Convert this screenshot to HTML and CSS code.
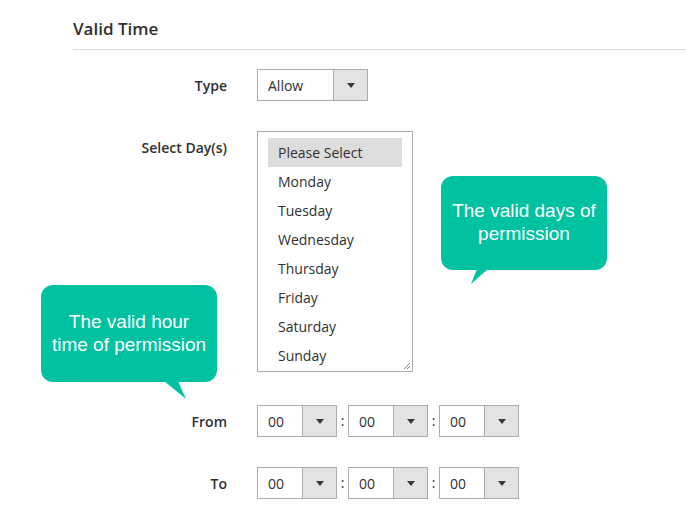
FILE: index.html
```html
<!DOCTYPE html>
<html>
<head>
<meta charset="utf-8">
<link rel="stylesheet" href="styles.css">
</head>
<body>
<div class="section">
  <h2 class="title">Valid Time</h2>
  <div class="form">
    <div class="row row-type">
      <div class="label">Type</div>
      <div class="select select-type"><span class="val">Allow</span><span class="arrow"></span></div>
    </div>
    <div class="row row-days">
      <div class="label">Select Day(s)</div>
      <div class="multi">
        <div class="opt sel">Please Select</div>
        <div class="opt">Monday</div>
        <div class="opt">Tuesday</div>
        <div class="opt">Wednesday</div>
        <div class="opt">Thursday</div>
        <div class="opt">Friday</div>
        <div class="opt">Saturday</div>
        <div class="opt">Sunday</div>
        <svg class="grip" width="8" height="8" viewBox="0 0 8 8"><path d="M7 1 L1 7 M7 4 L4 7" stroke="#8a8a8a" stroke-width="1"/></svg>
      </div>
    </div>
    <div class="row row-from">
      <div class="label">From</div>
      <div class="time">
        <div class="select select-time"><span class="val">00</span><span class="arrow"></span></div>
        <span class="colon">:</span>
        <div class="select select-time"><span class="val">00</span><span class="arrow"></span></div>
        <span class="colon">:</span>
        <div class="select select-time"><span class="val">00</span><span class="arrow"></span></div>
      </div>
    </div>
    <div class="row row-to">
      <div class="label">To</div>
      <div class="time">
        <div class="select select-time"><span class="val">00</span><span class="arrow"></span></div>
        <span class="colon">:</span>
        <div class="select select-time"><span class="val">00</span><span class="arrow"></span></div>
        <span class="colon">:</span>
        <div class="select select-time"><span class="val">00</span><span class="arrow"></span></div>
      </div>
    </div>
  </div>
</div>

<div class="bubble bubble-days">
  The valid days of<br>permission
  <svg class="tail tail-days" width="20" height="16" viewBox="0 0 20 16"><path d="M7 0 L18 0 L1 15 Z" fill="#00c2a1"/></svg>
</div>
<div class="bubble bubble-hours">
  The valid hour<br>time of permission
  <svg class="tail tail-hours" width="24" height="20" viewBox="0 0 24 20"><path d="M2 0 L16 0 L24 18 Z" fill="#00c2a1"/></svg>
</div>
</body>
</html>
```
FILE: styles.css
```css
html, body {
  margin: 0;
  padding: 0;
  background: #ffffff;
}
body {
  font-family: "Open Sans", "Liberation Sans", sans-serif;
  color: #303030;
  width: 686px;
  height: 514px;
  overflow: hidden;
  position: relative;
}
.section {
  padding-left: 73px;
}
.title {
  margin: 0;
  padding-top: 17px;
  height: 32px;
  box-sizing: content-box;
  font-size: 17px;
  font-weight: 600;
  line-height: 24px;
  color: #303030;
  border-bottom: 1px solid #e3ddd2;
}
.form {
  padding-top: 19px;
}
.row {
  display: flex;
  align-items: flex-start;
}
.row-days { margin-top: 30px; }
.row-from { margin-top: 33px; }
.row-to { margin-top: 30px; }
.label {
  width: 154px;
  margin-right: 30px;
  text-align: right;
  font-size: 14px;
  font-weight: 600;
  line-height: 18px;
  padding-top: 8px;
  color: #303030;
}
.select {
  display: flex;
  height: 32px;
  box-sizing: border-box;
  border: 1px solid #adadad;
  background: #fff;
  font-size: 14px;
  line-height: 31px;
}
.select .val {
  flex: 1;
  padding-left: 10px;
  color: #303030;
}
.select .arrow {
  width: 33px;
  border-left: 1px solid #adadad;
  background: #e3e3e3;
  position: relative;
}
.select .arrow::after {
  content: "";
  position: absolute;
  left: 50%;
  top: 50%;
  margin-left: -4px;
  margin-top: -2px;
  border-left: 4px solid transparent;
  border-right: 4px solid transparent;
  border-top: 5px solid #41362f;
}
.select-type { width: 111px; }
.select-time { width: 80px; }
.time {
  display: flex;
  align-items: center;
}
.colon {
  width: 11px;
  text-align: center;
  font-size: 14px;
  line-height: 32px;
}
.multi {
  width: 156px;
  height: 241px;
  box-sizing: border-box;
  border: 1px solid #adadad;
  padding: 6px 10px;
  position: relative;
  font-size: 14px;
}
.opt {
  height: 29px;
  line-height: 29px;
  padding-left: 10px;
  color: #303030;
}
.opt.sel {
  background: #dddddd;
}
.grip {
  position: absolute;
  right: 1px;
  bottom: 1px;
}
.bubble {
  position: absolute;
  background: #00c2a1;
  color: #ffffff;
  font-family: "Liberation Sans", Arial, sans-serif;
  font-size: 19px;
  line-height: 23px;
  text-align: center;
  border-radius: 12px;
  box-sizing: border-box;
}
.bubble-days {
  left: 441px;
  top: 176px;
  width: 166px;
  height: 94px;
  padding-top: 23px;
}
.bubble-hours {
  left: 41px;
  top: 285px;
  width: 176px;
  height: 97px;
  padding-top: 25px;
}
.tail {
  position: absolute;
  display: block;
}
.tail-days {
  left: 29px;
  top: 93px;
}
.tail-hours {
  left: 121px;
  top: 96px;
}
```
